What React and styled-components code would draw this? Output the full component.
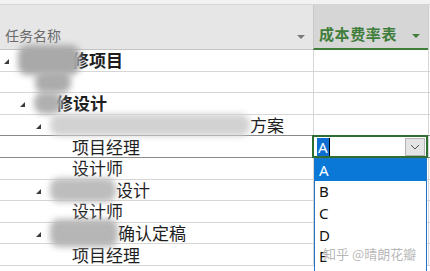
import styled, { createGlobalStyle } from "styled-components";

const GlobalStyle = createGlobalStyle`
  html, body {
    margin: 0;
    padding: 0;
    background: #ffffff;
  }
  body {
    font-family: "Noto Sans CJK SC", "Noto Sans", sans-serif;
  }
`;

const COLS = "313px 115px 2px";

const Sheet = styled.div`
  position: relative;
  width: 430px;
  height: 271px;
  overflow: hidden;
  background: #ffffff;
`;

const TopStrip = styled.div`
  height: 4px;
  background: #f2f2f2;
  border-bottom: 1px solid #d6d6d6;
`;

const Header = styled.div`
  display: grid;
  grid-template-columns: ${COLS};
  height: 45px;
`;

const HeadCell = styled.div`
  display: flex;
  align-items: flex-end;
  justify-content: space-between;
  padding: 0 8px 4px 5px;
  background: ${(p) => (p.$accent ? "#d6d6d6" : "#e6e6e6")};
  border-left: ${(p) => (p.$accent ? "1px solid #c9c9c9" : "none")};
  border-bottom: ${(p) => (p.$accent ? "2px solid #3f7d3a" : "1px solid #c4c4c4")};
  color: ${(p) => (p.$accent ? "#3f7d3a" : "#6b6b6b")};
  font-size: ${(p) => (p.$accent ? "15px" : "14px")};
  font-weight: ${(p) => (p.$accent ? 700 : 400)};
  letter-spacing: ${(p) => (p.$accent ? "0.6px" : "0")};
`;

const HeadEdge = styled.div`
  background: #f0f0f0;
  border-left: 1px solid #cfcfcf;
`;

const SortArrow = styled.span`
  width: 0;
  height: 0;
  margin-bottom: 6px;
  border-left: 4px solid transparent;
  border-right: 4px solid transparent;
  border-top: 4px solid ${(p) => p.$color};
`;

const Row = styled.div`
  display: grid;
  grid-template-columns: ${COLS};
  height: 21.6px;
  box-sizing: border-box;
  border-bottom: 1px solid ${(p) => (p.$dark ? "#8a8a8a" : "#d6d6d6")};
`;

const NameCell = styled.div`
  display: flex;
  align-items: center;
  min-height: 20px;
  padding-left: ${(p) => p.$indent}px;
  font-size: 17px;
  line-height: 20px;
  color: #1e1e1e;
  font-weight: ${(p) => (p.$bold ? 700 : 400)};
  white-space: nowrap;
`;

const Caret = styled.span`
  flex: none;
  width: 0;
  height: 0;
  margin-right: 9px;
  margin-top: 3px;
  border-left: 5px solid transparent;
  border-bottom: 5px solid #3a3a3a;
`;

const Smudge = styled.span`
  flex: none;
  display: block;
  width: ${(p) => p.$w}px;
  height: ${(p) => p.$h}px;
  margin-right: ${(p) => p.$overlap}px;
  background: ${(p) => p.$tone};
  border-radius: 9px;
  filter: blur(3px);
  position: relative;
  z-index: 1;
`;

const RateCell = styled.div`
  border-left: 1px solid #d6d6d6;
`;

const EdgeCell = styled.div`
  border-left: 1px solid #d6d6d6;
`;

const ActiveCell = styled.div`
  display: flex;
  align-items: center;
  justify-content: space-between;
  margin: -1px 0 -1px -1px;
  padding: 0 1px 0 3px;
  border: 2px solid #2f6e33;
  background: #ffffff;
  position: relative;
  z-index: 2;
`;

const Picked = styled.span`
  display: flex;
  align-items: center;
  height: 18px;
  padding: 0 1px;
  background: #0f6fd0;
  color: #ffffff;
  font-family: "Noto Sans", sans-serif;
  font-size: 15px;
  border-right: 1px solid #000;
`;

const DropButton = styled.span`
  display: flex;
  align-items: center;
  justify-content: center;
  width: 18px;
  height: 16px;
  background: #e4e4e4;
  border: 1px solid #b4b4b4;
`;

const ListBox = styled.div`
  position: absolute;
  left: 314px;
  top: 158px;
  width: 113px;
  height: 130px;
  box-sizing: border-box;
  border: 1px solid #1d74c9;
  background: #ffffff;
  z-index: 3;
`;

const Option = styled.div`
  height: 21.6px;
  display: flex;
  align-items: center;
  padding-left: 4px;
  font-family: "Noto Sans", sans-serif;
  font-size: 15px;
  color: ${(p) => (p.$selected ? "#ffffff" : "#111111")};
  background: ${(p) => (p.$selected ? "#0a78d7" : "transparent")};
`;

const Watermark = styled.div`
  position: absolute;
  left: 323px;
  top: 244px;
  font-size: 13px;
  color: rgba(170, 170, 170, 0.85);
  text-shadow: 0 0 2px #ffffff, 0 0 1px #ffffff;
  white-space: nowrap;
  z-index: 4;
`;

const rows = [
  { indent: 4, caret: true, bold: true, smudge: { w: 62, h: 30, tone: "#a9a9a9", overlap: -8 }, text: "修项目" },
  { indent: 35, smudge: { w: 36, h: 22, tone: "#acacac", overlap: 0 }, text: "" },
  { indent: 20, caret: true, bold: true, smudge: { w: 28, h: 22, tone: "#b0b0b0", overlap: -6 }, text: "修设计" },
  { indent: 36, caret: true, smudge: { w: 200, h: 22, tone: "#d2d2d2", overlap: 0 }, text: "方案", dark: true },
  { indent: 72, text: "项目经理", dark: true, active: true },
  { indent: 72, text: "设计师" },
  { indent: 36, caret: true, smudge: { w: 66, h: 24, tone: "#bdbdbd", overlap: 0 }, text: "设计" },
  { indent: 72, text: "设计师" },
  { indent: 36, caret: true, smudge: { w: 68, h: 28, tone: "#b6b6b6", overlap: 0 }, text: "确认定稿" },
  { indent: 72, text: "项目经理" },
];

const Chevron = () => (
  <svg width="10" height="6" viewBox="0 0 10 6">
    <path d="M1 1 L5 5 L9 1" fill="none" stroke="#555" strokeWidth="1" />
  </svg>
);

const App = () => {
  return (
    <>
      <GlobalStyle />
      <Sheet>
        <TopStrip />
        <Header>
          <HeadCell>
            <span>任务名称</span>
            <SortArrow $color="#7a7a7a" />
          </HeadCell>
          <HeadCell $accent>
            <span>成本费率表</span>
            <SortArrow $color="#3f7d3a" />
          </HeadCell>
          <HeadEdge />
        </Header>

        {rows.map((r, i) => (
          <Row key={i} $dark={r.dark}>
            <NameCell $indent={r.indent} $bold={r.bold}>
              {r.caret && <Caret />}
              {r.smudge && (
                <Smudge
                  $w={r.smudge.w}
                  $h={r.smudge.h}
                  $tone={r.smudge.tone}
                  $overlap={r.smudge.overlap}
                />
              )}
              {r.text && <span>{r.text}</span>}
            </NameCell>
            {r.active ? (
              <ActiveCell>
                <Picked>A</Picked>
                <DropButton>
                  <Chevron />
                </DropButton>
              </ActiveCell>
            ) : (
              <RateCell />
            )}
            <EdgeCell />
          </Row>
        ))}

        <ListBox>
          {["A", "B", "C", "D", "E"].map((opt) => (
            <Option key={opt} $selected={opt === "A"}>
              {opt}
            </Option>
          ))}
        </ListBox>
        <Watermark>知乎 @晴朗花瓣</Watermark>
      </Sheet>
    </>
  );
};

export default App;
